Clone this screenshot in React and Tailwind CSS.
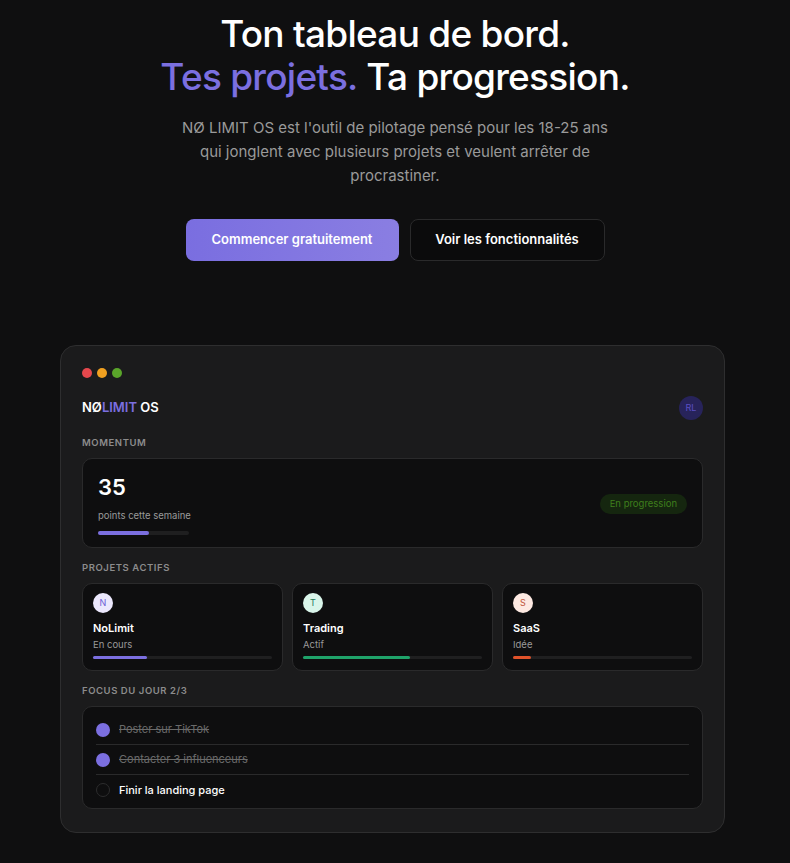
import React from 'react';

const projects = [
  { letter: 'N', name: 'NoLimit', status: 'En cours', pct: 30, chip: 'bg-[#ece8fd] text-[#6d5fd6]', bar: 'bg-[#7b6fe0]' },
  { letter: 'T', name: 'Trading', status: 'Actif', pct: 60, chip: 'bg-[#d9f5ea] text-[#1e7a58]', bar: 'bg-[#1fa36a]' },
  { letter: 'S', name: 'SaaS', status: 'Idée', pct: 10, chip: 'bg-[#fde9e2] text-[#c0553a]', bar: 'bg-[#e0522a]' },
];

const tasks = [
  { label: 'Poster sur TikTok', done: true },
  { label: 'Contacter 3 influenceurs', done: true },
  { label: 'Finir la landing page', done: false },
];

const Label = ({ children, className = '' }) => (
  <div className={`text-[9.5px] font-semibold uppercase leading-[15px] tracking-[0.06em] text-[#8c8c8c] ${className}`}>{children}</div>
);

const App = () => {
  return (
    <div className="min-h-[863px] bg-[#0f0f10] font-['Inter',sans-serif] text-white">
      <div className="flex flex-col items-center pt-[12px]">
        <h1 className="text-center text-[37px] font-medium leading-[43px] tracking-[-0.02em]">
          Ton tableau de bord.
          <br />
          <span className="text-[#7b6fe0]">Tes projets.</span> Ta progression.
        </h1>
        <p className="mt-[18px] max-w-[450px] text-center text-[15px] leading-6 text-[#9a9a9a]">
          NØ LIMIT OS est l'outil de pilotage pensé pour les 18-25 ans qui jonglent avec plusieurs projets et veulent arrêter de procrastiner.
        </p>
        <div className="mt-[31px] flex gap-[11px]">
          <button className="h-[42px] w-[213px] rounded-lg bg-gradient-to-r from-[#7a6ee0] to-[#8a7ee2] text-[13px] font-semibold text-white">
            Commencer gratuitement
          </button>
          <button className="h-[42px] w-[195px] rounded-lg border border-[#2a2a2b] bg-[#0b0b0c] text-[13px] font-semibold text-white">
            Voir les fonctionnalités
          </button>
        </div>
      </div>

      <div className="ml-[60px] mt-[84px] w-[665px] rounded-2xl border border-[#2e2e2f] bg-[#1b1b1c] px-[21px] pb-[23px] pt-[22px]">
        {/* window controls */}
        <div className="flex gap-[5px]">
          <span className="h-[10px] w-[10px] rounded-full bg-[#e5484d]" />
          <span className="h-[10px] w-[10px] rounded-full bg-[#f0a020]" />
          <span className="h-[10px] w-[10px] rounded-full bg-[#5aa52a]" />
        </div>

        <div className="mt-[18px] flex items-center justify-between">
          <div className="text-[13px] font-semibold">
            NØ<span className="text-[#7b6fe0]">LIMIT</span> OS
          </div>
          <div className="flex h-6 w-6 items-center justify-center rounded-full bg-[#27235a] text-[9px] text-[#5b4fc4]">RL</div>
        </div>

        <Label className="mt-[15px]">Momentum</Label>
        <div className="mt-[8px] flex items-center justify-between rounded-[10px] border border-[#2a2a2b] bg-[#0e0e0f] px-[15px] pb-[12px] pt-[14px]">
          <div>
            <div className="text-[22px] font-semibold leading-7">35</div>
            <div className="mt-[7px] text-[9.5px] leading-[15px] text-[#9a9a9a]">points cette semaine</div>
            <div className="mt-[8px] h-1 w-[91px] rounded-full bg-[#1f1f20]">
              <div className="h-1 w-[56%] rounded-full bg-[#7b6fe0]" />
            </div>
          </div>
          <span className="rounded-full bg-[#15260f] px-[10px] py-[4px] text-[9.5px] leading-3 text-[#3f7f1c]">En progression</span>
        </div>

        <Label className="mt-[12px]">Projets actifs</Label>
        <div className="mt-[8px] grid grid-cols-3 gap-[9px]">
          {projects.map((p) => (
            <div key={p.name} className="rounded-[10px] border border-[#2a2a2b] bg-[#0e0e0f] px-[10px] pb-[11px] pt-[9px]">
              <div className={`flex h-5 w-5 items-center justify-center rounded-full text-[9px] ${p.chip}`}>{p.letter}</div>
              <div className="mt-[7px] text-[11px] font-semibold leading-4">{p.name}</div>
              <div className="mt-[2px] text-[9.5px] leading-[13px] text-[#9a9a9a]">{p.status}</div>
              <div className="mt-[5px] h-[3px] rounded-full bg-[#1f1f20]">
                <div className={`h-[3px] rounded-full ${p.bar}`} style={{ width: `${p.pct}%` }} />
              </div>
            </div>
          ))}
        </div>

        <Label className="mt-[12px]">Focus du jour 2/3</Label>
        <div className="mt-[8px] rounded-[10px] border border-[#2a2a2b] bg-[#0e0e0f] px-[13px] pb-[3px] pt-[8px]">
          {tasks.map((t, i) => (
            <div
              key={t.label}
              className={`flex h-[30px] items-center gap-[9px] ${i < tasks.length - 1 ? 'border-b border-[#2a2a2b]' : ''}`}
            >
              {t.done ? (
                <span className="h-[14px] w-[14px] rounded-full bg-[#7b6fe0]" />
              ) : (
                <span className="h-[14px] w-[14px] rounded-full border border-[#2c2c2d]" />
              )}
              <span className={`text-[11px] ${t.done ? 'text-[#6a6a6a] line-through' : 'font-medium text-white'}`}>{t.label}</span>
            </div>
          ))}
        </div>
      </div>
    </div>
  );
};

export default App;
